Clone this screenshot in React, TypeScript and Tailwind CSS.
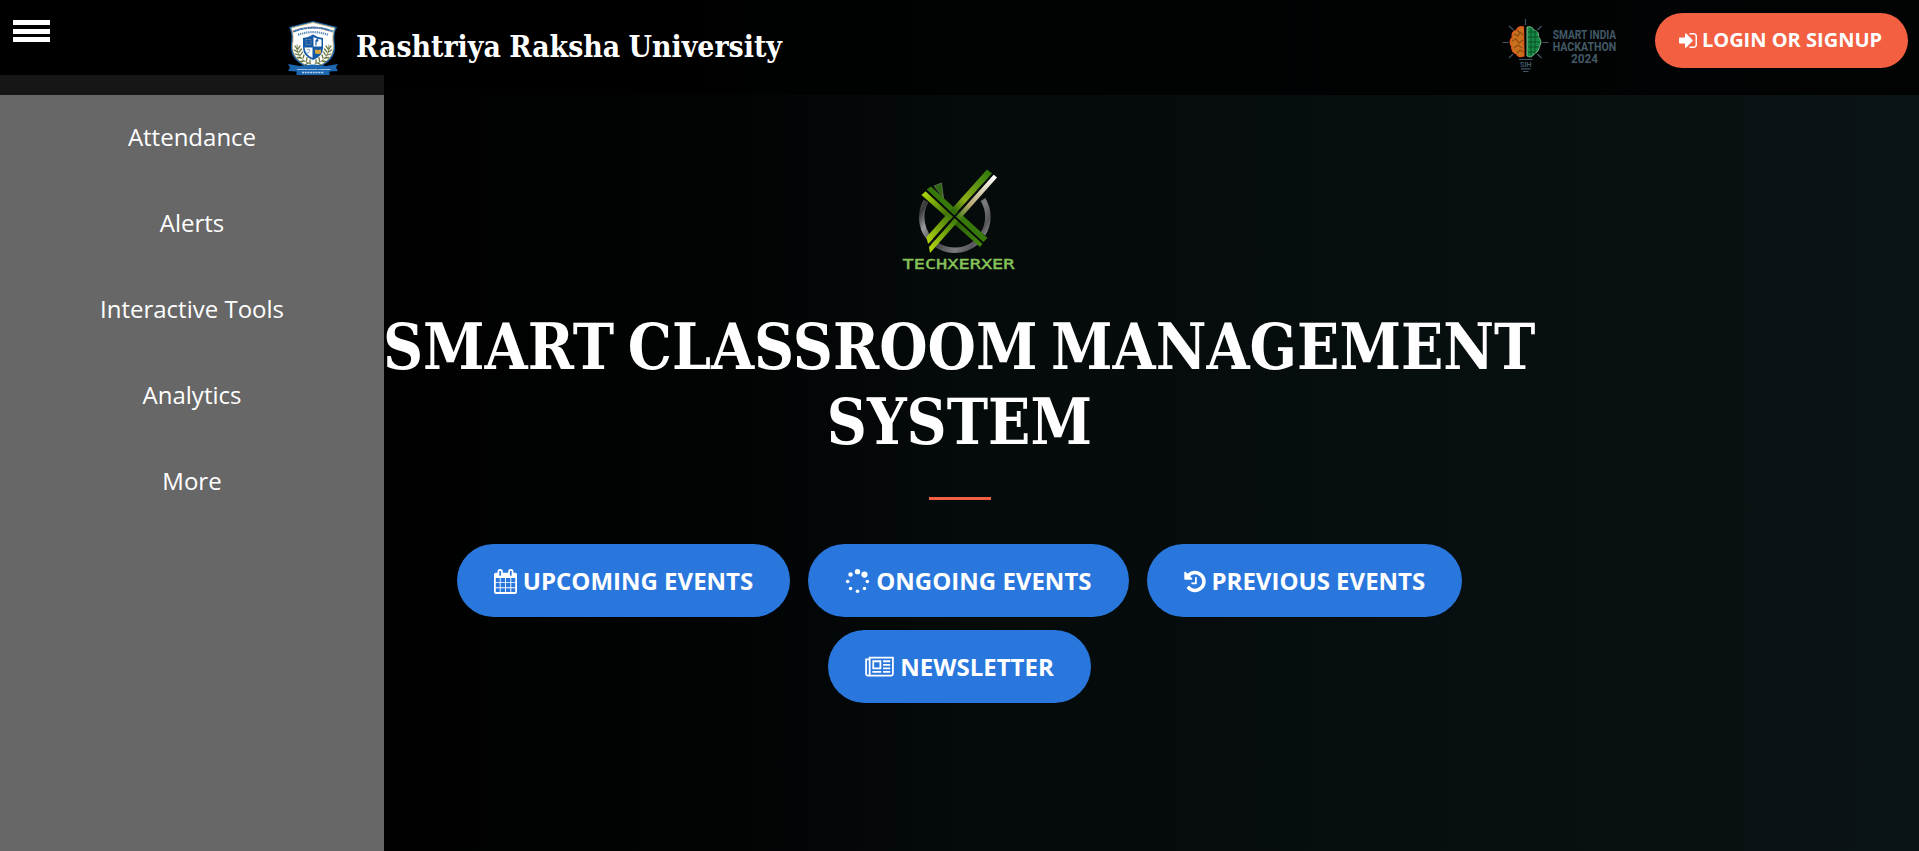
import type { ReactNode } from "react";

const SIGN_IN =
  "M1312 896q0 26-19 45l-544 544q-19 19-45 19t-45-19-19-45v-288h-448q-26 0-45-19t-19-45v-384q0-26 19-45t45-19h448v-288q0-26 19-45t45-19 45 19l544 544q19 19 19 45zm352-352v704q0 119-84.5 203.5t-203.5 84.5h-320q-13 0-22.5-9.5t-9.5-22.5q0-4-1-20t-.5-26.5 3-23.5 10-19.5 20.5-6.5h320q66 0 113-47t47-113v-704q0-66-47-113t-113-47h-312l-11.5-1-11.5-3-8-5.5-7-9-2-13.5q0-4-1-20t-.5-26.5 3-23.5 10-19.5 20.5-6.5h320q119 0 203.5 84.5t84.5 203.5z";
const CALENDAR =
  "M192 1664h288v-288h-288v288zm352 0h320v-288h-320v288zm-352-352h288v-320h-288v320zm352 0h320v-320h-320v320zm-352-384h288v-288h-288v288zm736 736h320v-288h-320v288zm-384-736h320v-288h-320v288zm768 736h288v-288h-288v288zm-384-352h320v-320h-320v320zm-352-864v-288q0-13-9.5-22.5t-22.5-9.5h-64q-13 0-22.5 9.5t-9.5 22.5v288q0 13 9.5 22.5t22.5 9.5h64q13 0 22.5-9.5t9.5-22.5zm736 864h288v-320h-288v320zm-384-384h320v-288h-320v288zm384 0h288v-288h-288v288zm32-480v-288q0-13-9.5-22.5t-22.5-9.5h-64q-13 0-22.5 9.5t-9.5 22.5v288q0 13 9.5 22.5t22.5 9.5h64q13 0 22.5-9.5t9.5-22.5zm384-64v1280q0 52-38 90t-90 38h-1408q-52 0-90-38t-38-90v-1280q0-52 38-90t90-38h128v-96q0-66 47-113t113-47h64q66 0 113 47t47 113v96h384v-96q0-66 47-113t113-47h64q66 0 113 47t47 113v96h128q52 0 90 38t38 90z";
const HISTORY =
  "M1664 896q0 156-61 298t-164 245-245 164-298 61q-172 0-327-72.5t-264-204.5q-7-10-6.5-22.5t8.5-20.5l137-138q10-9 25-9 16 2 23 12 73 95 179 147t225 52q104 0 198.5-40.5t163.5-109.5 109.5-163.5 40.5-198.5-40.5-198.5-109.5-163.5-163.5-109.5-198.5-40.5q-98 0-188 35.5t-160 101.5l137 138q31 30 14 69-17 40-59 40h-448q-26 0-45-19t-19-45v-448q0-42 40-59 39-17 69 14l130 129q107-101 244.5-156.5t284.5-55.5q156 0 298 61t245 164 164 245 61 298zm-640-288v448q0 14-9 23t-23 9h-320q-14 0-23-9t-9-23v-64q0-14 9-23t23-9h224v-352q0-14 9-23t23-9h64q14 0 23 9t9 23z";
const NEWSPAPER =
  "M1024 512h-384v384h384v-384zm128 640v128h-640v-128h640zm0-768v640h-640v-640h640zm640 768v128h-512v-128h512zm0-256v128h-512v-128h512zm0-256v128h-512v-128h512zm0-256v128h-512v-128h512zm-1536 960v-960h-128v960q0 26 19 45t45 19 45-19 19-45zm1664 0v-1088h-1536v1088q0 33-11 64h1483q26 0 45-19t19-45zm128-1216v1216q0 80-56 136t-136 56h-1664q-80 0-136-56t-56-136v-1088h256v-128h1792z";

function UniversityCrest() {
  return (
    <svg viewBox="0 0 50 55" className="h-[55px] w-[50px]" aria-hidden="true">
      <path d="M25 1 L49 7 C46 13 46 18 47 25 C48 37 41 44 25 50 C9 44 2 37 3 25 C4 18 4 13 1 7 Z" fill="#1c62a8" />
      <path d="M25 2.6 L46.6 8 C44.4 14 44.6 19 45.4 25 C46 36 39 43 25 48.4 C11 43 4 36 4.6 25 C5.400 19 5.600 14 3.400 8 Z" fill="#fff" stroke="#d9bd74" strokeWidth=".8" />
      <path id="crest-arc" d="M5.500 12.500 Q25 4.500 44.500 12.500" fill="none" />
      <text fontSize="2.500" fontWeight="700" fill="#174f8c" stroke="#174f8c" strokeWidth=".25" fontFamily="Open Sans, sans-serif">
        <textPath href="#crest-arc">RASHTRIYA RAKSHA UNIVERSITY</textPath>
      </text>
      <path d="M10 14.800 Q25 9.500 40 14.800" fill="none" stroke="#5d8aba" strokeWidth="2.200" strokeDasharray="1.300 .8" />
      <path d="M15 18 Q20 18 25 14.600 Q30 18 35 18 V28 Q35 36 25 40 Q15 36 15 28 Z" fill="#1459a6" />
      <path d="M25.500 17 Q29 19 33.500 19.500 V26.500 H25.500 Z M16.500 27.500 H24.500 V38 Q17 34.500 16.500 27.500 Z" fill="#fff" />
      <path d="M18 19.500h5v5h-5z" fill="none" stroke="#7b8fa6" strokeWidth="1" strokeDasharray="1 .6" />
      <path d="M28 25.500v-5q2-2 2 0l-2 1.500" fill="none" stroke="#1459a6" strokeWidth="1.100" />
      <path d="M18.500 30q4-2 3 1t-3 2" fill="none" stroke="#6e94bd" strokeWidth=".9" />
      <path d="M27 29.500l3 .6 3-.6v4l-3 .6-3-.6z" fill="#d7a43c" />
      <g fill="none" stroke="#66733a" strokeLinecap="round">
        <path d="M9 25 Q8 40 23 44 M41 25 Q42 40 27 44" strokeWidth=".8" />
        <path d="M9 29l-2-3 M9.500 32l-3-2 M11 35l-3.500-1 M13 38l-3.500-.5 M16 41l-3.500.5 M20 43l-3 2 M10 29l2-3 M11 32l2.500-3 M12.500 35l2-3 M15 38l1-3 M18.500 41l.5-3.500 M22 43l0-3 M41 29l2-3 M40.500 32l3-2 M39 35l3.500-1 M37 38l3.500-.5 M34 41l3.500.5 M30 43l3 2 M40 29l-2-3 M39 32l-2.500-3 M37.500 35l-2-3 M35 38l-1-3 M31.500 41l-.5-3.500 M28 43l0-3" strokeWidth="1.300" />
      </g>
      <path d="M0 44 L12 46 Q25 43 38 46 L50 44 L48 47.500 L50 51 L41.500 51.500 V55 H8.500 V51.500 L0 51 L2 47.500 Z" fill="#1d66b0" />
      <text x="9" y="50" fontSize="2.300" fontWeight="700" fill="#fff" fontFamily="Open Sans, sans-serif">National Security is Supreme</text>
      <path d="M14 52.500 H36" stroke="#b9d0e8" strokeWidth="1.600" strokeDasharray="2 .7" />
    </svg>
  );
}

function HackathonLogo() {
  return (
    <svg viewBox="0 0 140 70" className="h-[70px] w-[140px]" aria-hidden="true">
      <path d="M33.500 17c-4-1-6 1-7 3-4 1-5 4-4 7-3 3-3 7-1 9 0 4 2 7 5 8 2 4 5 3 7.500 2z" fill="#c8701c" stroke="#e0561c" strokeWidth="1.200" />
      <path d="M24 24l4 2 2-4 3 3 M22 31l4-2 3 4 4-3 M24 38l4-3 4 3 M27 43l3-3 3 2 M27 20l3 3" fill="none" stroke="#8b4a12" strokeWidth="1.100" />
      <path d="M37 17c4-1 6 1 7 3 4 1 5 4 4.500 7 3 3 3 7 1 9-.5 4-2.500 7-5.500 8-2 4-5 3-7 2z" fill="#168a44" stroke="#86bd95" strokeWidth="1" />
      <path d="M38 22h9 M38 27h11 M38 32h12 M38 37h11 M38 42h7 M41 18v27 M45 20v24" fill="none" stroke="#0a5127" strokeWidth="1" />
      <path d="M35.500 9v6 M19 16l4.500 4 M51.500 16l-4 4 M12.500 32.500h6 M52.500 32.500h6 M19 48l4-4 M51.500 48l-4-4 M29 49.500h13.500 M31 58.800h9.500 M33 61.500h5.500" stroke="#3f5663" strokeWidth="1.200" fill="none" />
      <g fill="#435966" fontFamily="Roboto, sans-serif" fontWeight="700">
        <text x="30" y="57" fontSize="7.500" textLength="11.500" lengthAdjust="spacingAndGlyphs">SIH</text>
        <text x="62.700" y="29" fontSize="12" textLength="63.500" lengthAdjust="spacingAndGlyphs">SMART INDIA</text>
        <text x="62.700" y="41" fontSize="12" textLength="63.500" lengthAdjust="spacingAndGlyphs">HACKATHON</text>
        <text x="81" y="53" fontSize="12" textLength="27" lengthAdjust="spacingAndGlyphs">2024</text>
      </g>
    </svg>
  );
}

function TechxerxerLogo() {
  return (
    <svg viewBox="0 0 140 120" className="h-[120px] w-[140px]" aria-hidden="true">
      <defs>
        <linearGradient id="ring" gradientUnits="userSpaceOnUse" x1="29" y1="35" x2="101" y2="80">
          <stop offset="0" stopColor="#77777b" />
          <stop offset=".12" stopColor="#38383b" />
          <stop offset=".25" stopColor="#9a9a9e" />
          <stop offset=".45" stopColor="#3a3a3d" />
          <stop offset=".7" stopColor="#7c7c80" />
          <stop offset=".85" stopColor="#55555a" />
          <stop offset="1" stopColor="#a9a9ad" />
        </linearGradient>
        <linearGradient id="blade" gradientUnits="userSpaceOnUse" x1="36" y1="84" x2="101" y2="12">
          <stop offset="0" stopColor="#b9dc10" />
          <stop offset=".45" stopColor="#2f6a08" />
          <stop offset=".6" stopColor="#8cae18" />
          <stop offset="1" stopColor="#2f7a0a" />
        </linearGradient>
        <linearGradient id="edge" gradientUnits="userSpaceOnUse" x1="40" y1="90" x2="107" y2="18">
          <stop offset="0" stopColor="#b5d90e" />
          <stop offset=".42" stopColor="#3a7a0a" />
          <stop offset=".6" stopColor="#b2a56c" />
          <stop offset="1" stopColor="#fff" />
        </linearGradient>
        <linearGradient id="cross" gradientUnits="userSpaceOnUse" x1="33" y1="30" x2="94" y2="84">
          <stop offset="0" stopColor="#b4e00c" />
          <stop offset=".5" stopColor="#285c06" />
          <stop offset="1" stopColor="#43880c" />
        </linearGradient>
      </defs>
      <path d="M36 41 A33 33 0 0 0 86 82.500 M93 74 A33 33 0 0 0 93 39.500" fill="none" stroke="url(#ring)" strokeWidth="5.500" />
      <path d="M44 26 L51.500 23 L53.500 38 Z" fill="#2f6513" stroke="#71806a" strokeWidth=".7" />
      <path d="M31.500 35 L36 31 L93 83 L90 87 Z" fill="url(#cross)" />
      <path d="M36.500 29.500 L41 26.500 L97.500 78 L93 82.500 Z" fill="#367809" />
      <path d="M36.500 77 L97 9.500 L102 13.500 L38 84 Z" fill="url(#blade)" />
      <path d="M39 87 L103.500 14.500 L107 17.500 L40 93 Z" fill="url(#edge)" />
      <path d="M38 86 L104 13 M34.500 29 L94 84" stroke="#070b0b" strokeWidth="1.800" />
      <text x="12.500" y="108.500" fontFamily="DejaVu Sans Mono, monospace" fontWeight="400" fontSize="14.500" fill="#86c45a" stroke="#86c45a" strokeWidth=".4" textLength="112" lengthAdjust="spacingAndGlyphs">TECHXERXER</text>
    </svg>
  );
}

function EventButton({ label, children }: { label: string; children: ReactNode }) {
  return (
    <a href="#" className="flex h-[73px] items-center gap-[6px] rounded-full bg-[#2977dd] px-[37px] pt-[1px] text-[24px] font-bold whitespace-nowrap text-white">
      {children}
      <span>{label}</span>
    </a>
  );
}

const MENU = ["Attendance", "Alerts", "Interactive Tools", "Analytics", "More"];

export default function App() {
  return (
    <div className="relative h-[851px] w-full overflow-hidden bg-linear-to-r from-black via-[#050a0a] to-[#0a1315] font-['Open_Sans',sans-serif] text-white">
      <aside className="absolute top-[75px] bottom-0 left-0 z-10 w-[384px] bg-[#676767] pt-[19px]">
        <nav className="flex flex-col text-center text-[24px]">
          {MENU.map((item) => (
            <a key={item} href="#" className="flex h-[86px] items-center justify-center">
              {item}
            </a>
          ))}
        </nav>
      </aside>

      <header className="relative z-20 flex h-[95px] items-start bg-black/78">
        <button aria-label="Toggle menu" className="mt-5 ml-[13px] flex w-[37px] flex-col gap-[3.500px]">
          <span className="h-[5px] bg-white" />
          <span className="h-[5px] bg-white" />
          <span className="h-[5px] bg-white" />
        </button>
        <div className="mt-5 ml-[238px]">
          <UniversityCrest />
        </div>
        <div className="mt-[27px] ml-[18px] w-[427px]">
          <span className="inline-block origin-left scale-x-[.995] font-['DejaVu_Serif_Condensed','DejaVu_Serif',serif] text-[30px] leading-10 font-bold font-stretch-condensed whitespace-nowrap [word-spacing:-1px]">
            Rashtriya Raksha University
          </span>
        </div>
        <div className="mt-[10px] ml-auto">
          <HackathonLogo />
        </div>
        <a href="#" className="mt-[13px] mr-[11px] ml-[25px] flex h-[55px] w-[253px] items-center justify-center gap-[5px] rounded-full bg-[#f26041] pr-[2px] pb-[1px] text-[20px] font-bold whitespace-nowrap">
          <svg viewBox="128 0 1536 1792" className="h-[21px] w-[18px] fill-white" aria-hidden="true">
            <path d={SIGN_IN} />
          </svg>
          LOGIN OR SIGNUP
        </a>
      </header>

      <main className="flex flex-col items-center pt-[65px]">
        <TechxerxerLogo />
        <h1 className="mt-[29px] flex flex-col items-center font-['DejaVu_Serif_Condensed','DejaVu_Serif',serif] text-[64px] leading-[75px] font-bold font-stretch-condensed whitespace-nowrap [word-spacing:-6px]">
          <span className="scale-x-[.965]">SMART CLASSROOM MANAGEMENT</span>
          <span className="scale-x-[.965]">SYSTEM</span>
        </h1>
        <hr className="mt-[38px] h-[3px] w-[62px] border-0 bg-[#f26041]" />
        <div className="mt-11 flex w-[1020px] flex-wrap justify-center gap-x-[18px] gap-y-[13px]">
          <EventButton label="UPCOMING EVENTS">
            <svg viewBox="64 0 1664 1792" className="h-[25px] w-[23px] fill-white" aria-hidden="true">
              <path d={CALENDAR} />
            </svg>
          </EventButton>
          <EventButton label="ONGOING EVENTS">
            <svg viewBox="0 0 1792 1792" className="h-[25px] w-[25px] fill-white" aria-hidden="true">
              <circle cx="398" cy="1394" r="128" />
              <circle cx="896" cy="1600" r="128" />
              <circle cx="192" cy="896" r="128" />
              <circle cx="1394" cy="1394" r="128" />
              <circle cx="398" cy="398" r="160" />
              <circle cx="1600" cy="896" r="128" />
              <circle cx="896" cy="192" r="192" />
              <circle cx="1394" cy="398" r="224" />
            </svg>
          </EventButton>
          <EventButton label="PREVIOUS EVENTS">
            <svg viewBox="128 0 1536 1792" className="h-[25px] w-[22px] fill-white" aria-hidden="true">
              <path d={HISTORY} />
            </svg>
          </EventButton>
          <EventButton label="NEWSLETTER">
            <svg viewBox="0 0 2048 1792" className="h-[25px] w-[29px] fill-white" aria-hidden="true">
              <path d={NEWSPAPER} />
            </svg>
          </EventButton>
        </div>
      </main>
    </div>
  );
}
